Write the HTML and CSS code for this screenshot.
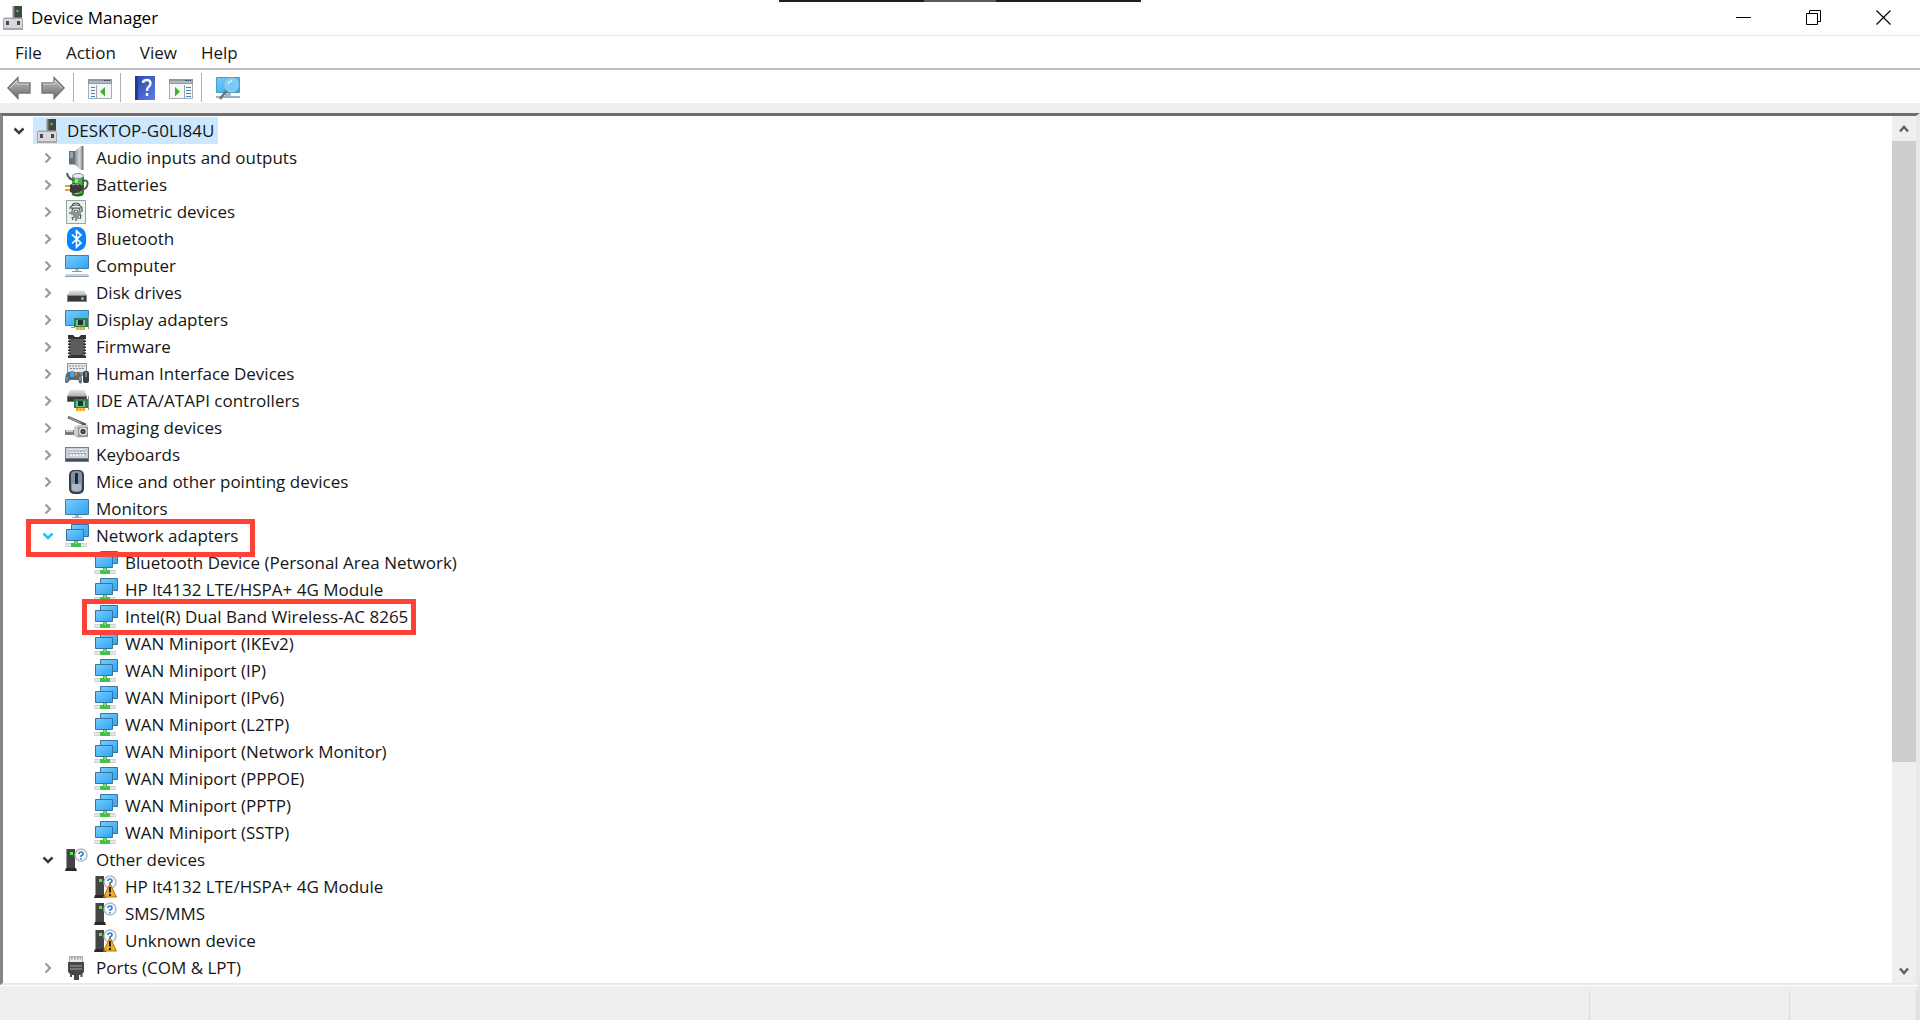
FILE: index.html
```html
<!DOCTYPE html>
<html lang="en">
<head>
    <meta charset="UTF-8">
    <meta name="viewport" content="width=device-width, initial-scale=1.0">
    <title>Device Manager</title>
    <link rel="stylesheet" href="styles.css">
</head>
<body>

<!-- icon set -->
<svg class="sprite" aria-hidden="true">
    <defs>
        <linearGradient id="g-screen" x1="0" y1="0" x2="1" y2="1"><stop offset="0" stop-color="#7accfb"/><stop offset="1" stop-color="#2ca4f5"/></linearGradient>
        <linearGradient id="g-grey" x1="0" y1="0" x2="0" y2="1"><stop offset="0" stop-color="#c2c2c2"/><stop offset="1" stop-color="#6c6c6c"/></linearGradient>
        <linearGradient id="g-drive" x1="0" y1="0" x2="0" y2="1"><stop offset="0" stop-color="#e4e4e4"/><stop offset="1" stop-color="#b4b4b4"/></linearGradient>
        <linearGradient id="g-help" x1="0" y1="0" x2="1" y2="1"><stop offset="0" stop-color="#2c44a8"/><stop offset="1" stop-color="#5c7ee6"/></linearGradient>
        <linearGradient id="g-cone" x1="0" y1="0" x2="1" y2="0"><stop offset="0" stop-color="#7d8388"/><stop offset=".6" stop-color="#d2d5d7"/><stop offset="1" stop-color="#8b9095"/></linearGradient>
    </defs>
    <symbol id="right" viewBox="0 0 12 12"><path d="M3.500 1.500 8 6l-4.500 4.500" fill="none" stroke="currentColor" stroke-width="2.200"/></symbol>
    <symbol id="down" viewBox="0 0 12 12"><path d="M1.500 3.500 6 8l4.500-4.500" fill="none" stroke="currentColor" stroke-width="2.500"/></symbol>
    <symbol id="up" viewBox="0 0 12 12"><path d="M2 8.500 6 4l4 4.500" fill="none" stroke="currentColor" stroke-width="2.500"/></symbol>
    <symbol id="root" viewBox="0 0 24 24">
        <path d="M11 0h9v13h-9z" fill="#444"/><path d="M10.500 0h2v12h-2z" fill="#8b8b8b"/><circle cx="15.500" cy="5" r="1.200" fill="#2fe43c"/>
        <path d="M2 11.500h18l1 2V24H1V13.500z" fill="#a9a7ab"/><path d="M2 13h18v9H2z" fill="#d9d7dc"/>
        <path d="M4 15h3v4H4zM15 15h3v4h-3z" fill="#4b4750"/>
    </symbol>
    <symbol id="audio" viewBox="0 0 24 24">
        <path d="M9 6 16 0h2v24h-2l-7-6z" fill="url(#g-cone)"/><path d="M17 0h1.500v24H17z" fill="#74797e"/>
        <path d="M4 5h6v13.500H4z" fill="#64717d"/><path d="M5 6h3v6H5z" fill="#94a4b2"/>
    </symbol>
    <symbol id="battery" viewBox="0 0 24 24">
        <path d="M7 4h12v17q-6 4-12 0z" fill="#48b53c"/><path d="M10 5h3v16h-3z" fill="#9ae77c"/><path d="M17 4h2v16h-2z" fill="#27812a"/><ellipse cx="13" cy="3" rx="5.500" ry="2.500" fill="#e6e8f4" stroke="#8688ac"/>
        <path d="M2 0q1 6 7 7M18 8q5-2 4.500 3t-6 6" fill="none" stroke="#565656" stroke-width="2"/>
        <path d="M0 13h6M0 17h6" stroke="#d9a51d" stroke-width="2"/><path d="M5 12q5-4 11 0l3 2-3 4q-6 4-11 1z" fill="#3b3b3b"/><path d="M7 12q4-2 7 0" stroke="#a7a7a7" fill="none"/>
        <path d="M7 21q5 3 11 0" stroke="#2d5c2b" fill="none" stroke-width="2"/>
    </symbol>
    <symbol id="biometric" viewBox="0 0 24 24">
        <path d="M1.500.500h19v23h-19z" fill="#eaf2ef" stroke="#8da9a4"/>
        <g fill="none" stroke="#4b5350" stroke-width="1.200"><path d="M7 5q1-2 4-2t4 2M5 9q0-4 6-4t6 4v3M7 15v-4q0-3 4-3t4 3v5M5 12v2M9 18v-6q0-2 2-2t2 2v7M11 12v9M7 17l1 3M16 15l-1 4M6 8h10"/></g>
    </symbol>
    <symbol id="bluetooth" viewBox="0 0 24 24">
        <rect x="2" y="0" width="19" height="24" rx="8.500" fill="#0a84f8"/><path d="m7 7.500 9 8.500-4.500 4V4l4.500 4-9 8.500" fill="none" stroke="#fff" stroke-width="1.700"/>
    </symbol>
    <symbol id="screen" viewBox="0 0 24 24">
        <path d="M.500 2.500h23v15H.500z" fill="url(#g-screen)" stroke="#417da7"/><path d="M10 18h4v2h3v1H7v-1h3z" fill="#a6b3bf"/>
    </symbol>
    <symbol id="computer" viewBox="0 0 24 24">
        <path d="M.500 1.500h23v13H.500z" fill="url(#g-screen)" stroke="#417da7"/><path d="M10 15h4v2h-4z" fill="#b5c0c9"/><path d="M7 17h10v1H7z" fill="#8599a8"/>
        <path d="M1 20h22l1 3H0z" fill="#c5d0da"/><path d="M0 22h24v1H0z" fill="#8fa2b3"/>
    </symbol>
    <symbol id="disk" viewBox="0 0 24 24">
        <path d="M5 9.500h14l3 5H2z" fill="url(#g-drive)"/><path d="M2 14h20v7H2z" fill="#858585"/><path d="M3 15h18v5H3z" fill="#383838"/><circle cx="17.500" cy="17.500" r="1.500" fill="#48e94f"/>
    </symbol>
    <symbol id="card" viewBox="0 0 24 24">
        <path d="M9 10h14v9H9z" fill="#268056"/><path d="M11 12h9v6h-9z" fill="#75bd92"/><path d="M13 12h5v5h-5z" fill="#24322b"/><path d="M23 7h1v14h-1z" fill="#8a9691"/><path d="M11 19h9v3h-9z" fill="#efa51d"/><path d="M14 19v3M17 19v3" stroke="#ffdb65"/>
    </symbol>
    <symbol id="display" viewBox="0 0 24 24">
        <path d="M.500 2.500h23v15H.500z" fill="url(#g-screen)" stroke="#417da7"/><path d="M6 19h4v1H6z" fill="#8599a8"/><use href="#card" width="24" height="24"/>
    </symbol>
    <symbol id="firmware" viewBox="0 0 24 24">
        <path d="M3 0h5l2 2h4l2-2h5v23H3z" fill="#333"/><path d="M6 4h12v16H6z" fill="#5c5c5c"/><path d="M3 4v17M21 4v17" stroke="#fff" stroke-width="2" stroke-dasharray="1.500 1.500"/><path d="M5 4v17M19 4v17" stroke="#bbb" stroke-dasharray="1.500 1.500"/>
    </symbol>
    <symbol id="hid" viewBox="0 0 24 24">
        <path d="M2 1h20v13H2z" fill="#87929b"/><path d="M3 2h18v8H3z" fill="#e6e9ec"/><path d="M4 4h16M5 6.500h14" stroke="#7e8991" stroke-dasharray="2 1"/>
        <path d="M0 20q0-10 4-10h9q4 0 4 10-2 4-4-2H5q-3 5-5 2z" fill="#5d6870"/><path d="M2 19v-4M15 19v-4" stroke="#aab3ba"/><path d="M5 9h4v6H5z" fill="#39a5ec"/><circle cx="11" cy="12" r="1.500" fill="#f18328"/>
        <rect x="18" y="9" width="6" height="12" rx="2" fill="#3a4148"/><path d="M21 10v5" stroke="#b3bdc5"/>
    </symbol>
    <symbol id="ide" viewBox="0 0 24 24">
        <path d="M5 1h14l3 6H2z" fill="url(#g-drive)"/><path d="M2 7h20v6H2z" fill="#737373"/><path d="M3 8h18v4H3z" fill="#393939"/><use href="#card" width="24" height="24"/>
    </symbol>
    <symbol id="imaging" viewBox="0 0 24 24">
        <path d="m3 1 18 8" stroke="#55585b" stroke-width="2.500"/><path d="M4 1.500 16 7" stroke="#b6b8ba"/><path d="M0 14h9v5H0z" fill="#777b7e"/><path d="M1 14h7v2H1z" fill="#c8cbcd"/><path d="m9 11 4-2h10v12l-10 1-4-2z" fill="#c9cbcd"/><path d="M13 11h10v10H13z" fill="#94999d"/><circle cx="18" cy="15.500" r="4" fill="#dadddf"/><circle cx="18" cy="15.500" r="2.500" fill="#20323c"/><circle cx="18" cy="15.500" r="1" fill="#39a08f"/>
    </symbol>
    <symbol id="keyboard" viewBox="0 0 24 24">
        <path d="M0 4h24v15H0z" fill="#747e89"/><path d="M1 5h22v10H1z" fill="#c9cfd6"/><path d="M3 7h18M4 9.500h17M5 12h14" stroke="#f8f9fa" stroke-width="1.500" stroke-dasharray="2 1"/><path d="M3 8h18M4 10.500h17" stroke="#89929b" stroke-dasharray="2 1"/><path d="M1 16h22v2H1z" fill="#454e58"/>
    </symbol>
    <symbol id="mouse" viewBox="0 0 24 24">
        <rect x="4" y="0" width="15" height="24" rx="5" fill="#353d47"/><rect x="6" y="1" width="11" height="21" rx="4" fill="#8092a6"/><path d="M7 14h9v6q-4.500 2-9 0z" fill="#aab8c7"/><rect x="10" y="3" width="3" height="11" rx="1" fill="#20262d"/>
    </symbol>
    <symbol id="network" viewBox="0 0 24 24">
        <path d="M6.500.500h17v12h-17z" fill="url(#g-screen)" stroke="#35759f"/><path d="M1.500 5.500h17v11h-17z" fill="url(#g-screen)" stroke="#35759f"/>
        <path d="M0 19h22v4H0z" fill="#d3d3d3"/><path d="M0 21h22" stroke="#f4f4f4"/><path d="M9 17h4v2h3v4H6v-4h3z" fill="#48be4d"/><path d="M10 17h2v3h-2z" fill="#78dd70"/>
    </symbol>
    <symbol id="unknown" viewBox="0 0 24 24">
        <path d="M2 1h8v19H2z" fill="#444"/><path d="M1 1h1v20H1z" fill="#999"/><path d="M5 4h3v3H5z" fill="#43f347"/><path d="M1 20h10l1 3H0z" fill="#292929"/>
        <circle cx="16" cy="7" r="6" fill="#f8fbfd" stroke="#b6babd" stroke-width="1.500"/><path d="M14 6q0-2 2-2t2 2q0 1-2 2v1M16 10v1.500" fill="none" stroke="#2684d1" stroke-width="1.700"/>
    </symbol>
    <symbol id="warning" viewBox="0 0 24 24">
        <use href="#unknown" width="24" height="24"/><path d="M16 8.500 22.500 22h-13z" fill="#edad2c" stroke="#ae7412"/><path d="M16 12v5.500M16 19v2" stroke="#241c0c" stroke-width="2"/>
    </symbol>
    <symbol id="port" viewBox="0 0 24 24">
        <path d="M4 0h14v8H4z" fill="#b5b5b5"/><path d="M5 2h12v5H5z" fill="#e9e9e9"/><path d="M6 3h10" stroke="#777" stroke-dasharray="1.500 1.500"/><path d="M3 6h16v10l-3 3h-2v5H9v-5H6l-3-3z" fill="#484848"/><path d="M5 10h12M5 13h12" stroke="#858585" stroke-width="1.500"/><path d="M6 17v4M16.500 17v4" stroke="#505050" stroke-width="2"/>
    </symbol>
    <symbol id="back" viewBox="0 0 24 24"><path d="M.800 12 11 1.500V7h12v10H11v5.500z" fill="url(#g-grey)" stroke="#737373" stroke-width="1.300"/><path d="M3 12 10 5v3h12" fill="none" stroke="#d6d6d6"/></symbol>
    <symbol id="forward" viewBox="0 0 24 24"><path d="M23.200 12 13 1.500V7H1v10h12v5.500z" fill="url(#g-grey)" stroke="#737373" stroke-width="1.300"/><path d="M2 8h12V4.500l7 7.500" fill="none" stroke="#d6d6d6"/></symbol>
    <symbol id="console" viewBox="0 0 24 24">
        <path d="M.500 3.500h23v19H.500z" fill="#f4f6f8" stroke="#a3adb6"/><path d="M0 3h24v5H0z" fill="#8b98a5"/><path d="M1 6h22" stroke="#d2d9e0"/><path d="M16 4.500h6" stroke="#34414e" stroke-dasharray="1.500 1"/>
        <path d="M8.500 9v13" stroke="#98a4af"/><path d="M3 11.500h4M3 14.500h4M3 17.500h4M3 20.500h4" stroke="#4681bc"/><path d="m17 11-5 4.500 5 5z" fill="#3fb32d"/>
    </symbol>
    <symbol id="action" viewBox="0 0 24 24">
        <path d="M.500 3.500h23v19H.500z" fill="#f4f6f8" stroke="#a3adb6"/><path d="M0 3h24v5H0z" fill="#8b98a5"/><path d="M1 6h22" stroke="#d2d9e0"/><path d="M16 4.500h6" stroke="#34414e" stroke-dasharray="1.500 1"/>
        <path d="M15.500 9v13" stroke="#98a4af"/><path d="M17 11.500h5M17 14.500h5M17 17.500h5M17 20.500h5" stroke="#4681bc"/><path d="m6 11 5 4.500-5 5z" fill="#3fb32d"/>
    </symbol>
    <symbol id="help" viewBox="0 0 24 24">
        <path d="M0 0h20v24H0z" fill="url(#g-help)"/><path d="M0 0h3v24H0z" fill="#243b94"/><path d="M8 7q0-3 4-3 3.500 0 3.500 3.500 0 2-2 3.500-1.500 1-1.500 4M12 17v3" fill="none" stroke="#f5f7ff" stroke-width="2.400"/>
    </symbol>
    <symbol id="scan" viewBox="0 0 24 24">
        <path d="M.500 1.500h23v15H.500z" fill="url(#g-screen)" stroke="#4a9fc5"/><path d="M9 17h6v3H9z" fill="#a5bac7"/><path d="M0 20h24v2H0z" fill="#9bb0be"/>
        <path d="m11 14-7 9" stroke="#68757e" stroke-width="2.500"/><circle cx="15.500" cy="9" r="6.500" fill="#83d1f8" fill-opacity=".8" stroke="#a9c7d6" stroke-width="1.500"/><path d="M12 8q1-3 4-3" fill="none" stroke="#d9f4ff" stroke-width="1.500"/>
    </symbol>
</svg>

<div class="window">
    <div class="call-bar"></div>

    <header class="titlebar">
        <svg class="icon"><use href="#root"/></svg>
        <h1 class="title">Device Manager</h1>
        <div class="win-buttons">
            <button class="win-btn" aria-label="Minimize"><svg viewBox="0 0 16 16"><path d="M0 7.500h15" stroke="#000"/></svg></button>
            <button class="win-btn" aria-label="Restore"><svg viewBox="0 0 16 16"><path d="M.500 3.500h11v11H.500zM3.500 3V.500h11v11H12" fill="none" stroke="#000"/></svg></button>
            <button class="win-btn" aria-label="Close"><svg viewBox="0 0 16 16"><path d="m.500.500 14 14m0-14-14 14" stroke="#000" stroke-width="1.200"/></svg></button>
        </div>
    </header>

    <nav class="menubar">
        <button class="menu">File</button>
        <button class="menu">Action</button>
        <button class="menu">View</button>
        <button class="menu">Help</button>
    </nav>

    <div class="toolbar">
        <button class="tool" aria-label="Back"><svg class="icon"><use href="#back"/></svg></button>
        <button class="tool" aria-label="Forward"><svg class="icon"><use href="#forward"/></svg></button>
        <span class="sep"></span>
        <button class="tool" aria-label="Show/Hide Console Tree"><svg class="icon"><use href="#console"/></svg></button>
        <span class="sep"></span>
        <button class="tool" aria-label="Help"><svg class="icon"><use href="#help"/></svg></button>
        <button class="tool" aria-label="Show/Hide Action Pane"><svg class="icon"><use href="#action"/></svg></button>
        <span class="sep"></span>
        <button class="tool" aria-label="Scan for hardware changes"><svg class="icon"><use href="#scan"/></svg></button>
    </div>

    <main class="pane">
        <ul class="tree">
            <li>
                <div class="row"><button class="twisty open" aria-label="Collapse"><svg><use href="#down"/></svg></button><span class="node selected"><svg class="icon"><use href="#root"/></svg>DESKTOP-G0LI84U</span></div>
                <ul>
                    <li class="row"><button class="twisty" aria-label="Expand"><svg><use href="#right"/></svg></button><span class="node"><svg class="icon"><use href="#audio"/></svg>Audio inputs and outputs</span></li>
                    <li class="row"><button class="twisty" aria-label="Expand"><svg><use href="#right"/></svg></button><span class="node"><svg class="icon"><use href="#battery"/></svg>Batteries</span></li>
                    <li class="row"><button class="twisty" aria-label="Expand"><svg><use href="#right"/></svg></button><span class="node"><svg class="icon"><use href="#biometric"/></svg>Biometric devices</span></li>
                    <li class="row"><button class="twisty" aria-label="Expand"><svg><use href="#right"/></svg></button><span class="node"><svg class="icon"><use href="#bluetooth"/></svg>Bluetooth</span></li>
                    <li class="row"><button class="twisty" aria-label="Expand"><svg><use href="#right"/></svg></button><span class="node"><svg class="icon"><use href="#computer"/></svg>Computer</span></li>
                    <li class="row"><button class="twisty" aria-label="Expand"><svg><use href="#right"/></svg></button><span class="node"><svg class="icon"><use href="#disk"/></svg>Disk drives</span></li>
                    <li class="row"><button class="twisty" aria-label="Expand"><svg><use href="#right"/></svg></button><span class="node"><svg class="icon"><use href="#display"/></svg>Display adapters</span></li>
                    <li class="row"><button class="twisty" aria-label="Expand"><svg><use href="#right"/></svg></button><span class="node"><svg class="icon"><use href="#firmware"/></svg>Firmware</span></li>
                    <li class="row"><button class="twisty" aria-label="Expand"><svg><use href="#right"/></svg></button><span class="node"><svg class="icon"><use href="#hid"/></svg>Human Interface Devices</span></li>
                    <li class="row"><button class="twisty" aria-label="Expand"><svg><use href="#right"/></svg></button><span class="node"><svg class="icon"><use href="#ide"/></svg>IDE ATA/ATAPI controllers</span></li>
                    <li class="row"><button class="twisty" aria-label="Expand"><svg><use href="#right"/></svg></button><span class="node"><svg class="icon"><use href="#imaging"/></svg>Imaging devices</span></li>
                    <li class="row"><button class="twisty" aria-label="Expand"><svg><use href="#right"/></svg></button><span class="node"><svg class="icon"><use href="#keyboard"/></svg>Keyboards</span></li>
                    <li class="row"><button class="twisty" aria-label="Expand"><svg><use href="#right"/></svg></button><span class="node"><svg class="icon"><use href="#mouse"/></svg>Mice and other pointing devices</span></li>
                    <li class="row"><button class="twisty" aria-label="Expand"><svg><use href="#right"/></svg></button><span class="node"><svg class="icon"><use href="#screen"/></svg>Monitors</span></li>
                    <li>
                        <div class="row"><button class="twisty open hover" aria-label="Collapse"><svg><use href="#down"/></svg></button><span class="node"><svg class="icon"><use href="#network"/></svg>Network adapters</span><span class="mark mark-group"></span></div>
                        <ul>
                            <li class="row"><span class="node"><svg class="icon"><use href="#network"/></svg>Bluetooth Device (Personal Area Network)</span></li>
                            <li class="row"><span class="node"><svg class="icon"><use href="#network"/></svg>HP lt4132 LTE/HSPA+ 4G Module</span></li>
                            <li class="row"><span class="node"><svg class="icon"><use href="#network"/></svg>Intel(R) Dual Band Wireless-AC 8265</span><span class="mark mark-device"></span></li>
                            <li class="row"><span class="node"><svg class="icon"><use href="#network"/></svg>WAN Miniport (IKEv2)</span></li>
                            <li class="row"><span class="node"><svg class="icon"><use href="#network"/></svg>WAN Miniport (IP)</span></li>
                            <li class="row"><span class="node"><svg class="icon"><use href="#network"/></svg>WAN Miniport (IPv6)</span></li>
                            <li class="row"><span class="node"><svg class="icon"><use href="#network"/></svg>WAN Miniport (L2TP)</span></li>
                            <li class="row"><span class="node"><svg class="icon"><use href="#network"/></svg>WAN Miniport (Network Monitor)</span></li>
                            <li class="row"><span class="node"><svg class="icon"><use href="#network"/></svg>WAN Miniport (PPPOE)</span></li>
                            <li class="row"><span class="node"><svg class="icon"><use href="#network"/></svg>WAN Miniport (PPTP)</span></li>
                            <li class="row"><span class="node"><svg class="icon"><use href="#network"/></svg>WAN Miniport (SSTP)</span></li>
                        </ul>
                    </li>
                    <li>
                        <div class="row"><button class="twisty open" aria-label="Collapse"><svg><use href="#down"/></svg></button><span class="node"><svg class="icon"><use href="#unknown"/></svg>Other devices</span></div>
                        <ul>
                            <li class="row"><span class="node"><svg class="icon"><use href="#warning"/></svg>HP lt4132 LTE/HSPA+ 4G Module</span></li>
                            <li class="row"><span class="node"><svg class="icon"><use href="#unknown"/></svg>SMS/MMS</span></li>
                            <li class="row"><span class="node"><svg class="icon"><use href="#warning"/></svg>Unknown device</span></li>
                        </ul>
                    </li>
                    <li class="row"><button class="twisty" aria-label="Expand"><svg><use href="#right"/></svg></button><span class="node"><svg class="icon"><use href="#port"/></svg>Ports (COM &amp; LPT)</span></li>
                </ul>
            </li>
        </ul>
        <div class="scrollbar">
            <button class="scroll-btn" aria-label="Scroll up"><svg><use href="#up"/></svg></button>
            <div class="track"><div class="thumb"></div></div>
            <button class="scroll-btn" aria-label="Scroll down"><svg class="flip"><use href="#up"/></svg></button>
        </div>
    </main>

    <footer class="statusbar">
        <span class="status-main"></span>
        <span class="status-mid"></span>
        <span class="status-end"></span>
    </footer>
</div>

</body>
</html>
```
FILE: styles.css
```css
* { box-sizing: border-box; }
body { margin: 0; background: #fff; color: #161616; font-family: "Open Sans", "Noto Sans", sans-serif; font-size: 17px; line-height: 27px; }
button { padding: 0; border: none; background: none; color: inherit; font: inherit; }
ul { list-style: none; margin: 0; padding: 0; }
svg { display: block; flex: none; }
.sprite { position: absolute; width: 0; height: 0; }
.icon { width: 24px; height: 24px; }

.window { height: 100vh; display: flex; flex-direction: column; }
.call-bar { position: absolute; top: 0; left: 779px; width: 362px; height: 2px; background: linear-gradient(90deg, #211e1f 40%, #5f5855 40%, #5f5855 60%, #211e1f 60%); }

.titlebar { display: flex; align-items: center; height: 36px; padding: 0 1px 0 2px; border-bottom: 1px solid #e6e6e6; }
.title { flex: 1; margin: 0 0 0 5px; font-size: 17px; font-weight: normal; color: #000; }
.win-buttons { display: flex; }
.win-btn { display: flex; align-items: center; justify-content: center; width: 70px; height: 34px; }
.win-btn svg { width: 16px; height: 16px; }

.menubar { display: flex; height: 34px; padding: 0 3px; border-bottom: 2px solid #bdbfc1; }
.menu { padding: 0 12px; }

.toolbar { display: flex; align-items: center; height: 33px; padding: 2px 0 0 2px; }
.tool { display: flex; align-items: center; justify-content: center; width: 34px; height: 30px; }
.sep { width: 1px; height: 29px; margin: 0 9px 0 3px; background: #b0b0b0; }

.pane { flex: 1; min-height: 0; display: flex; margin-top: 10px; border-top: 3px solid #6d6d6d; border-left: 3px solid #858585; border-right: 4px solid #e8e8e8; border-bottom: 2px solid #e8e8e8; box-shadow: 0 -10px 0 #eee; }
.tree { flex: 1; overflow: hidden; padding-top: 1px; }
.tree ul { padding-left: 29px; }
.row { position: relative; display: flex; align-items: center; height: 27px; padding-left: 7px; }
.twisty { display: flex; align-items: center; justify-content: center; width: 18px; height: 24px; color: #9c9c9c; }
.twisty svg { width: 12px; height: 12px; }
.twisty.open { color: #3c3c3c; }
.twisty.hover { color: #1cc4f7; }
.node { display: flex; align-items: center; gap: 7px; height: 27px; margin-left: 5px; padding: 0 4px 0 3px; white-space: nowrap; }
.node:first-child { margin-left: 23px; }
.selected { background: #cce8ff; }

/* red frames around the adapter group and the wireless card */
.mark { position: absolute; z-index: 1; border: 5px solid #ff4236; }
.mark-group { left: -6px; top: -3px; width: 229px; height: 38px; }
.mark-device { left: 21px; top: -4px; width: 334px; height: 36px; }

.scrollbar { display: flex; flex-direction: column; width: 24px; background: #efefef; }
.scroll-btn { display: flex; align-items: center; justify-content: center; height: 25px; color: #606060; }
.scroll-btn svg { width: 12px; height: 12px; }
.flip { transform: rotate(180deg); }
.track { flex: 1; }
.thumb { height: 76%; background: #cdcdcd; }

.statusbar { display: flex; height: 35px; padding-top: 4px; background: #efefef; border-top: 1px solid #fff; border-right: 3px solid #e4e4e4; }
.statusbar span { border-right: 1px solid #dcdcdc; }
.status-main { flex: 1; }
.status-mid { width: 200px; }
.status-end { width: 127px; }
```
